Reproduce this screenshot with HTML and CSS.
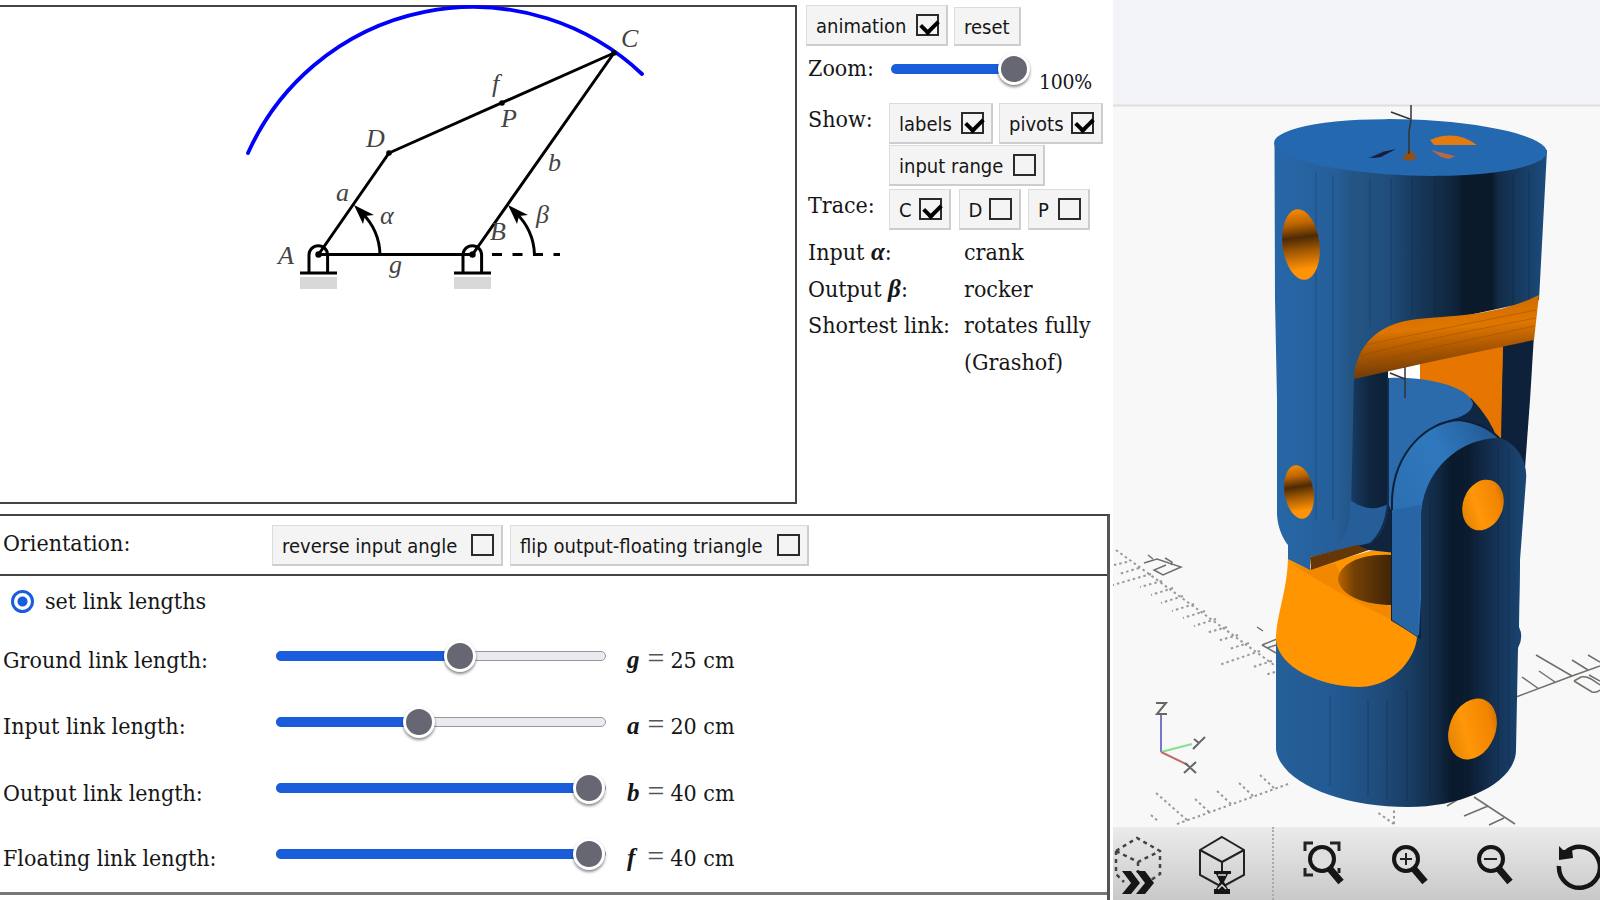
FILE: index.html
```html
<!DOCTYPE html>
<html lang="en">
<head>
<meta charset="utf-8">
<title>Four-bar linkage</title>
<link rel="stylesheet" href="styles.css">
</head>
<body>
<main class="linkage">
  <section class="top">
    <div class="canvas">
      <svg class="diagram" width="795" height="495" viewBox="0 7 795 495">
        <path class="trace" d="M248 153A246.5 246.5 0 0 1 642 74"/>
        <g class="bars">
          <path d="M318.5 254.5L389 153L614 53L472.5 254.5Z"/>
          <path class="dash" d="M492 254.5H560"/>
          <path d="M309 273V255a9.300 9.300 0 0 1 18.600 0V273M300 273H337M463 273V255a9.300 9.300 0 0 1 18.600 0V273M454 273H491"/>
          <path d="M380 254.500A61 61 0 0 0 362 213M534.500 254.500A61 61 0 0 0 516 213"/>
        </g>
        <path d="M354 205l20 10-9 1-2 8zM508 205l20 10-9 1-2 8z"/>
        <g><circle cx="318.500" cy="254.500" r="3.200"/><circle cx="472.500" cy="254.500" r="3.200"/><circle cx="389" cy="153" r="2.800"/><circle cx="502" cy="103" r="2.800"/><circle cx="614" cy="53" r="2.800"/></g>
        <path class="ground" d="M300 277h37v12h-37zM454 277h37v12h-37z"/>
        <g class="names">
          <text x="278" y="264">A</text><text x="490" y="240">B</text><text x="621" y="47">C</text><text x="366" y="147">D</text><text x="501" y="127">P</text>
          <text x="336" y="201">a</text><text x="548" y="171">b</text><text x="492" y="92">f</text><text x="389" y="273">g</text><text x="380" y="224">α</text><text x="536" y="223">β</text>
        </g>
      </svg>
    </div>
    <aside class="side">
      <div class="actions"><span class="btn">animation<i class="box on"></i></span><span class="btn reset">reset</span></div>
      <div class="line zoom"><span class="key">Zoom:</span><span class="slider small"><span class="fill" style="width:123px"></span><span class="thumb"></span></span><span class="pct">100%</span></div>
      <div class="line show"><span class="key">Show:</span><div class="group"><span class="btn">labels<i class="box on"></i></span><span class="btn">pivots<i class="box on"></i></span><span class="btn">input range<i class="box"></i></span></div></div>
      <div class="line tracing"><span class="key">Trace:</span><div class="group"><span class="btn">C<i class="box on"></i></span><span class="btn">D<i class="box"></i></span><span class="btn">P<i class="box"></i></span></div></div>
      <dl class="facts">
        <dt>Input <b>α</b>:</dt><dd>crank</dd>
        <dt>Output <b>β</b>:</dt><dd>rocker</dd>
        <dt>Shortest link:</dt><dd>rotates fully<br>(Grashof)</dd>
      </dl>
    </aside>
  </section>
  <section class="settings">
    <div class="orient"><span class="label">Orientation:</span><span class="btn rev">reverse input angle<i class="box"></i></span><span class="btn flip">flip output-floating triangle<i class="box"></i></span></div>
    <div class="mode"><i class="radio"></i><span>set link lengths</span></div>
    <div class="row"><span class="label">Ground link length:</span><span class="slider"><span class="fill" style="width:184px"></span><span class="thumb"></span></span><span class="value"><b>g</b><u>=</u>25 cm</span></div>
    <div class="row"><span class="label">Input link length:</span><span class="slider"><span class="fill" style="width:143px"></span><span class="thumb"></span></span><span class="value"><b>a</b><u>=</u>20 cm</span></div>
    <div class="row"><span class="label">Output link length:</span><span class="slider"><span class="fill" style="width:313px"></span><span class="thumb"></span></span><span class="value"><b>b</b><u>=</u>40 cm</span></div>
    <div class="row"><span class="label">Floating link length:</span><span class="slider"><span class="fill" style="width:313px"></span><span class="thumb"></span></span><span class="value f"><b>f</b><u>=</u>40 cm</span></div>
  </section>
</main>
<section class="viewer">
  <svg class="model" width="487" height="827" viewBox="1113 0 487 827">
    <defs>
      <linearGradient id="up" gradientUnits="userSpaceOnUse" x1="1274" y1="0" x2="1547" y2="0">
        <stop offset="0" stop-color="#2767a8"/><stop offset=".22" stop-color="#265f9a"/><stop offset=".29" stop-color="#235583"/><stop offset=".42" stop-color="#204d7c"/><stop offset=".5" stop-color="#193d63"/><stop offset=".59" stop-color="#142f4c"/><stop offset=".67" stop-color="#0e2339"/><stop offset=".69" stop-color="#0b1a2b"/><stop offset=".8" stop-color="#0b1a2b"/><stop offset=".82" stop-color="#122b47"/><stop offset=".9" stop-color="#173b60"/><stop offset="1" stop-color="#1c4c7e"/>
      </linearGradient>
      <linearGradient id="low" gradientUnits="userSpaceOnUse" x1="1276" y1="0" x2="1526" y2="0">
        <stop offset="0" stop-color="#266099"/><stop offset=".22" stop-color="#225a93"/><stop offset=".42" stop-color="#204b7b"/><stop offset=".55" stop-color="#183b60"/><stop offset=".66" stop-color="#10263f"/><stop offset=".7" stop-color="#0a1a2c"/><stop offset=".77" stop-color="#0b1c30"/><stop offset=".84" stop-color="#122b4a"/><stop offset="1" stop-color="#1b4776"/>
      </linearGradient>
      <linearGradient id="band" x1="0" y1="0" x2=".15" y2="1"><stop offset="0" stop-color="#c86700"/><stop offset=".45" stop-color="#df7600"/><stop offset=".7" stop-color="#ab5700"/><stop offset="1" stop-color="#6e3a08"/></linearGradient>
      <linearGradient id="holeL" x1="0" y1="0" x2="0" y2="1"><stop offset="0" stop-color="#f58a00"/><stop offset=".2" stop-color="#bd6500"/><stop offset=".4" stop-color="#4e2a05"/><stop offset=".6" stop-color="#a55a02"/><stop offset=".85" stop-color="#ff9205"/></linearGradient>
      <linearGradient id="holeR" x1="1" y1="0" x2="0" y2="1"><stop offset="0" stop-color="#a85a00"/><stop offset=".25" stop-color="#f28500"/><stop offset=".6" stop-color="#ff9708"/><stop offset="1" stop-color="#d67800"/></linearGradient>
      <linearGradient id="bore" x1="0" y1="0" x2="1" y2="0"><stop offset="0" stop-color="#b96500"/><stop offset=".3" stop-color="#744005"/><stop offset="1" stop-color="#3e2407"/></linearGradient>
      <linearGradient id="arch" x1="0" y1="1" x2="1" y2="0"><stop offset="0" stop-color="#2868a8"/><stop offset=".65" stop-color="#3078bd"/><stop offset="1" stop-color="#20558d"/></linearGradient>
      <linearGradient id="slot" x1="0" y1="0" x2="1" y2="0"><stop offset="0" stop-color="#173b63"/><stop offset=".5" stop-color="#10263f"/><stop offset="1" stop-color="#0c2036"/></linearGradient>
    </defs>
    <path class="sky" d="M1113 0h487v105h-487z"/><path class="edge" d="M1113 105.500h487"/>
    <g class="dots">
      <path d="M1116 550L1274 665M1127 562l-13 3M1139 568l-20 6M1151 574l-38 11M1162 581l-22 6M1173 588l-22 7M1183 596l-22 7M1194 604l-22 7M1205 611l-22 7M1216 619l-22 7M1227 627l-21 6M1238 635l-21 6M1249 643l-20 6M1260 651l-41 14M1272 661l-19 6M1275 672l-10 3"/>
      <path d="M1177 824l114-41M1187 820l-31-27M1209 812l-15-14M1231 804l-14-13M1253 796l-14-13M1274 788l-14-13M1151 815l8 7M1394 824v-16M1394 824l-17-12"/>
    </g>
    <g class="ticks">
      <path d="M1516 697L1572 676L1600 666M1539 689l-17-12M1555 682l-16-11M1572 676l-36-21M1588 670l-16-10M1600 662l-12-7M1474 797l41 27M1488 806l-24 10M1504 818l-15 7M1457 800l-10 6"/>
      <path d="M1574 681l7-4q5-1 10 2l9 6M1574 681l18 11q5 1 8-2M1589 675l11 6"/>
      <path d="M1144 563l13-4 24 8-18 8-9-5 12-5M1165 558l7 4-1 3M1148 555l5 4M1257 627l6 4M1262 645l15-6M1262 645l14 8M1267 648l9-3"/>
    </g>
    <g class="compass"><path stroke="#7776cf" d="M1161 752v-39"/><path stroke="#87df8e" d="M1161 752l31-8"/><path stroke="#c36b6b" d="M1161 752l27 13"/><path stroke="#666" d="M1156 703h10l-9 11h10M1194 739l5 4 6-6M1199 743l-6 6M1185 763l11 10M1196 762l-12 11"/></g>

    <path fill="url(#low)" d="M1276 640V750C1282 785 1345 807 1408 807C1465 807 1516 782 1516 750L1518 648Q1524 637 1519 627L1520 560L1421 540V620H1390Z"/>
    <path fill="#ff9500" d="M1288 555C1288 590 1276 615 1276 640C1278 667 1320 687 1360 687C1397 686 1416 655 1417 637L1392 620V550L1370 551L1311 568Z"/>
    <path fill="#f28800" d="M1311 570L1335 563Q1348 593 1392 607V620Q1340 595 1290 563Z"/>
    <path fill="url(#bore)" d="M1392 555C1358 553 1338 566 1338 580C1341 596 1365 605 1392 605Z"/>

    <path fill="#e77600" d="M1418 355L1505 335V440H1492L1471 420L1418 385Z"/>
    <path fill="#fff" d="M1387 372L1420 362V382H1387Z"/>
    <path fill="#102440" d="M1350 480H1396V553L1368 550L1340 552Z"/>
    <path fill="url(#up)" d="M1274.500 143L1275 300L1277 400V515C1278 530 1284 540 1288 545V559L1310 570V557L1357 544L1358 525L1354 380L1357 365L1400 330L1539 300L1547 150Z"/>
    <path fill="#0d223a" d="M1503 345L1534 335L1530 400L1525 468L1500 440Z"/>
    <path fill="#e77600" d="M1420 360L1503 342L1501 438L1494 437L1465 395L1420 381Z"/>
    <path fill="#fff" d="M1387 372L1420 360V382H1387Z"/>
    <path fill="url(#slot)" d="M1354 376L1388 369V503Q1386 525 1351 510Z"/>
    <path fill="#255e99" d="M1350 500Q1370 514 1388 504C1388 525 1378 540 1370 543L1310 557L1331 549Q1351 540 1350 500Z"/>
    <path fill="#663706" d="M1310 557L1357 545L1369 550L1311 570Z"/>
    <path fill="url(#band)" d="M1354 379C1356 345 1378 323 1418 319C1470 315 1503 313 1539 295L1534 340L1430 362Z"/>
    <path class="grain" d="M1358 366Q1400 354 1535 326M1360 356Q1400 344 1536 318M1365 345Q1410 335 1536 310"/>
    <path fill="#102744" d="M1471 398Q1490 418 1498 440L1450 430L1410 430Z"/>
    <path fill="#2b6bac" d="M1388 378C1425 376 1468 386 1473 403C1472 417 1450 419 1438 424C1405 442 1391 475 1391 510L1388 503Z"/>
    <path class="seam" d="M1388 378V500Q1387 530 1369 545"/>
    <path fill="url(#arch)" stroke="#0c203a" stroke-width="2" d="M1392 620V500C1394 450 1429 421 1459 420Q1484 423 1499 438L1425 540L1420 637Z"/>
    <path fill="url(#low)" d="M1421 650V515C1423 472 1458 438 1499 438C1517 442 1528 463 1526 480L1520 560L1518 650Z"/>
    <path fill="#2765a5" d="M1392 510L1421 505L1418 637L1392 620Z"/>
    <path class="facets" d="M1430 500V797M1444 470V795M1461 460V794M1478 455V788M1498 448V778M1509 448V765M1368 700V796M1387 700V800M1407 690V802M1330 695V786M1370 178V327M1391 178V320M1412 178V317M1435 178V316M1513 175V306M1529 170V300M1333 175V520M1316 172V520"/>

    <ellipse cx="1410.500" cy="147.500" rx="136.500" ry="28" fill="#2469af" transform="rotate(2 1410.500 147.500)"/>
    <path fill="#e37b10" d="M1430 140Q1455 129 1477 145L1434 145Z"/><path fill="#b66a43" d="M1431 150l24 6-6 3-8-2z"/><path fill="#1b1c3d" d="M1371 157l12-5-15 1 14-1 14-3-15 8-7 1-7-1z"/><path fill="#925018" d="M1402 159l8-10 7 9-7 3z"/>
    <path class="axis" d="M1411 105V120L1409 131V154M1391 112L1410 119M1405 367V398M1390 373L1405 379"/>
    <ellipse cx="1301" cy="244.500" rx="18.500" ry="35.500" fill="url(#holeL)" transform="rotate(-7 1301 244.500)"/>
    <ellipse cx="1299" cy="492" rx="14.500" ry="27" fill="url(#holeL)" transform="rotate(-9 1299 492)"/>
    <ellipse cx="1483" cy="505" rx="20" ry="26" fill="url(#holeR)" transform="rotate(20 1483 505)"/>
    <ellipse cx="1472.500" cy="729" rx="23" ry="31.500" fill="url(#holeR)" transform="rotate(22 1472.500 729)"/>
  </svg>
  <nav class="tools">
    <svg class="t1" width="52" height="73" viewBox="1113 827 52 73"><path class="dotcube" d="M1116 851L1137 838L1160 851V874L1148 882M1116 851V874L1124 882M1116 851L1138 862L1160 851M1138 862V873"/><path d="M1122 871h9l9 12-9 11h-9l9-11zM1136 871h9l9 12-9 11h-9l9-11z"/></svg>
    <svg class="t2" width="50" height="73" viewBox="1197 827 50 73"><path class="thin" d="M1222 837L1244 850V875L1222 887L1200 875V850ZM1200 850L1222 862L1244 850M1222 862V873"/><path d="M1214 871h17v3h-3l-4 8 4 7h2v5h-16v-5h2l4-7-4-8h-2z"/><path stroke="#ddd" stroke-width="1.500" d="M1218 875h8M1218 889l4-4 4 4"/></svg>
    <i class="sep"></i>
    <svg class="t3" width="44" height="73" viewBox="1302 827 44 73"><path class="mid" d="M1305 851v-8h8M1330 843h9v8M1305 868v7h8M1339 868v5"/><circle class="lens" cx="1322" cy="859" r="12"/><path class="handle" d="M1330 869L1341 882"/></svg>
    <svg class="t4" width="44" height="73" viewBox="1387 827 44 73"><circle class="lens" cx="1406" cy="859" r="12"/><path class="thin" d="M1400 859h12M1406 853v12"/><path class="handle" d="M1414 869L1425 882"/></svg>
    <svg class="t5" width="44" height="73" viewBox="1472 827 44 73"><circle class="lens" cx="1491" cy="859" r="12"/><path class="thin" d="M1484 859h13"/><path class="handle" d="M1499 869L1510 882"/></svg>
    <svg class="t6" width="44" height="73" viewBox="1556 827 44 73"><path class="turn" d="M1559 866A20.500 20.500 0 1 0 1567 851"/><path d="M1559 846l4 4 9-1 1 9-14 2z"/></svg>
  </nav>
</section>
</body>
</html>
```
FILE: styles.css
```css
* { box-sizing: border-box; }
body {
  margin: 0; width: 1600px; height: 900px; overflow: hidden; display: flex;
  background: #fff; color: #161616;
  font: 23px/36.7px "DejaVu Serif Condensed", "DejaVu Serif", serif;
  font-stretch: condensed; white-space: nowrap;
}
.linkage { width: 1110px; height: 900px; flex: none; }
.top { display: flex; height: 504px; }
.canvas { width: 797px; margin-top: 5px; height: 499px; border: 2px solid #444; border-left: 0; flex: none; }
.diagram { display: block; overflow: visible; }
.trace { fill: none; stroke: #0000fb; stroke-width: 3.8; stroke-linecap: round; }
.bars { fill: none; stroke: #000; stroke-width: 3; stroke-linejoin: round; }
.dash { stroke-dasharray: 10 10.500; }
.ground { fill: #d8d8d8; }
.names { font: italic 26px "Liberation Serif", serif; fill: #444; }

.side { padding: 5px 0 0 9px; width: 313px; }
.btn {
  display: inline-flex; align-items: center; justify-content: space-between; height: 40px;
  padding: 2px 7px 0 9px; background: #f4f4f4; border: 1px solid #dcdcdc;
  border-right: 2px solid #cdcdcd; border-bottom: 2px solid #cdcdcd;
  font: 20px/36px "DejaVu Sans Condensed", "DejaVu Sans", sans-serif; font-stretch: condensed;
}
.box { width: 23px; height: 22px; border: 2px solid #2b2b2b; flex: none; margin-top: -2px; }
.box.on::after {
  content: ""; display: block; width: 13px; height: 8px; margin: 3px 0 0 3px;
  border-left: 4px solid #000; border-bottom: 4px solid #000; transform: rotate(-45deg);
}
.actions { display: flex; gap: 6px; align-items: flex-end; height: 41px; }
.actions .btn { width: 142px; height: 41px; }
.actions .reset { width: 67px; height: 39px; }
.line { display: flex; padding-left: 2px; }
.key { width: 81px; flex: none; }
.zoom { height: 57px; padding-top: 4px; }
.pct { margin: 14px 0 0 25px; font-size: 21px; letter-spacing: -.3px; }
.group { display: flex; flex-wrap: wrap; gap: 1px 6px; }
.show .btn { width: 104px; height: 41px; }
.show .btn:nth-child(3) { width: 156px; }
.show .key, .tracing .key { margin-top: -2px; }
.tracing { height: 48px; padding-top: 3px; }
.tracing .btn { width: 62px; height: 41px; }
.tracing .group { gap: 1px 7.5px; }
.facts { margin: 0; padding-left: 2px; display: grid; grid-template-columns: 156px 1fr; }
.facts dt, .facts dd { margin: 0; }
.facts dt { height: 36.7px; }
.facts b, .value b { font: italic bold 25px/20px "Liberation Serif", serif; }

.settings { margin-top: 10px; height: 386px; border-top: 2px solid #444; border-right: 3px solid #555; }
.orient { height: 60px; border-bottom: 2px solid #444; display: flex; align-items: center; padding-left: 3px; }
.orient .label { width: 269px; margin-top: -3px; }
.orient .btn { height: 41px; }
.rev { width: 231px; margin-right: 7px; }
.flip { width: 299px; }
.label { width: 273px; flex: none; }
.mode { height: 51px; display: flex; align-items: center; gap: 11px; padding-left: 11px; }
.radio { width: 23px; height: 23px; border-radius: 50%; border: 3px solid #1a5ddb; background: radial-gradient(circle, #1a5ddb 4.5px, #fff 5.5px); }
.row { height: 66.2px; display: flex; align-items: center; padding: 1px 0 0 3px; }
.row:last-child { height: 69px; padding-bottom: 1px; border-bottom: 3px solid #777; }
.slider { width: 330px; height: 10px; border: 1px solid #96969e; border-radius: 5px; background: #ebebef; display: flex; align-items: center; margin-top: -9px; flex: none; }
.slider.small { width: 123px; border: 0; margin: 14px 0 0 2px; background: none; }
.fill { height: 10px; margin-left: -1px; background: #1a5ddb; border-radius: 5px 0 0 5px; flex: none; }
.small .fill { margin-left: 0; }
.thumb { width: 32px; height: 32px; margin-left: -16px; border-radius: 50%; border: 3px solid #fff; background: #676774; box-shadow: 0 2px 3px #0007; flex: none; }
.value { padding-left: 21px; }
.value u { text-decoration: none; margin: 0 6px 0 8px; font: 30px/20px "Liberation Serif", serif; color: #555; }
.value.f u { margin-left: 12px; }

.viewer { width: 487px; margin-left: 3px; height: 900px; background: #f8f8f8; flex: none; overflow: hidden; }
.model { display: block; }
.sky { fill: #f3f4f8; }
.edge { stroke: #dededc; stroke-width: 2; }
.dots { fill: none; stroke: #999; stroke-width: 2; stroke-dasharray: 2.500 3; }
.ticks { fill: none; stroke: #6f6f6b; stroke-width: 1.5; }
.compass { fill: none; stroke-width: 2; }
.grain { fill: none; stroke: #8a4906; opacity: .4; }
.seam { fill: none; stroke: #122c4a; stroke-width: 2; }
.facets { fill: none; stroke: #071a30; stroke-width: 1.5; opacity: .18; }
.axis { fill: none; stroke: #333; stroke-width: 1.5; }
.tools { height: 73px; display: flex; background: linear-gradient(#ebebeb, #c9c9c9); fill: #161616; }
.tools svg { flex: none; }
.t2 { margin-left: 32px; }
.sep { margin-left: 25px; border-left: 2px dotted #aaa; height: 73px; }
.t3 { margin-left: 28px; }
.t4, .t5 { margin-left: 41px; }
.t6 { margin-left: 40px; }
.dotcube { fill: none; stroke: #444; stroke-width: 2.5; stroke-dasharray: 4 4; }
.thin { fill: none; stroke: #222; stroke-width: 2; }
.mid { fill: none; stroke: #222; stroke-width: 3; }
.lens { fill: #dedede; stroke: #161616; stroke-width: 4; }
.handle { stroke: #161616; stroke-width: 7; }
.turn { fill: none; stroke: #161616; stroke-width: 4.5; }
```
